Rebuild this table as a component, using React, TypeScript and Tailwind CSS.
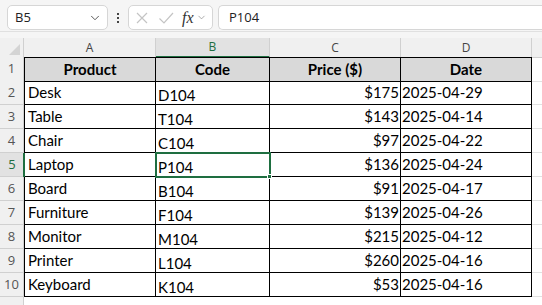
import { ChevronDown } from 'lucide-react'

type Row = { product: string; code: string; price: string; date: string }

const rows: Row[] = [
  { product: 'Desk', code: 'D104', price: '$175', date: '2025-04-29' },
  { product: 'Table', code: 'T104', price: '$143', date: '2025-04-14' },
  { product: 'Chair', code: 'C104', price: '$97', date: '2025-04-22' },
  { product: 'Laptop', code: 'P104', price: '$136', date: '2025-04-24' },
  { product: 'Board', code: 'B104', price: '$91', date: '2025-04-17' },
  { product: 'Furniture', code: 'F104', price: '$139', date: '2025-04-26' },
  { product: 'Monitor', code: 'M104', price: '$215', date: '2025-04-12' },
  { product: 'Printer', code: 'L104', price: '$260', date: '2025-04-16' },
  { product: 'Keyboard', code: 'K104', price: '$53', date: '2025-04-16' },
]

const cellFont = { fontFamily: 'Lato, "Open Sans", sans-serif' }

const FormulaBar = () => (
  <div className="flex h-[32px] items-start border-b border-[#e0e0e0] bg-[#f5f5f5] pl-[7px] pt-[5px]">
    <div className="flex h-[25px] w-[101px] items-center justify-between rounded-[5px] border border-[#d6d6d6] bg-white pl-[7px] pr-[5px] text-[13px] text-[#222]">
      <span>B5</span>
      <ChevronDown size={14} strokeWidth={1.5} className="text-[#444]" />
    </div>
    <div className="mx-[8px] flex h-[25px] w-[4px] flex-col items-center justify-center gap-[2px]">
      <span className="h-[2px] w-[2px] bg-[#444]" />
      <span className="h-[2px] w-[2px] bg-[#444]" />
      <span className="h-[2px] w-[2px] bg-[#444]" />
    </div>
    <div className="flex h-[25px] w-[85px] items-center rounded-[5px] border border-[#d6d6d6] bg-white pl-[5px]">
      <svg width="14" height="14" viewBox="0 0 14 14" className="ml-[1px]">
        <path d="M2 2 L12 12 M12 2 L2 12" stroke="#c4c4c4" strokeWidth="1.2" fill="none" />
      </svg>
      <svg width="16" height="14" viewBox="0 0 16 14" className="ml-[9px]">
        <path d="M1.5 7.5 L6 12 L15 2" stroke="#c4c4c4" strokeWidth="1.2" fill="none" />
      </svg>
      <span
        className="ml-[8px] text-[16px] italic leading-none text-[#333]"
        style={{ fontFamily: '"Liberation Serif", serif' }}
      >
        fx
      </span>
      <ChevronDown size={11} strokeWidth={1.5} className="ml-[2px] text-[#888]" />
    </div>
    <div className="ml-[5px] flex h-[25px] flex-1 items-center rounded-l-[5px] border border-r-0 border-[#d6d6d6] bg-white pl-[10px] text-[13px] text-[#222]">
      P104
    </div>
  </div>
)

const App = () => {
  const cols = 'grid grid-cols-[24px_132px_114px_131px_131px_1fr]'

  return (
    <div
      className="h-[305px] w-[542px] overflow-hidden bg-white"
      style={{ fontFamily: '"Open Sans", "Noto Sans", sans-serif' }}
    >
      <FormulaBar />
      <div className="h-[6px] bg-[#f5f5f5]" />

      <div className="relative">
        <div className={`${cols} h-[19px] bg-[#f0f0f0] text-[12px] text-[#444]`}>
          <div className="flex items-end justify-end border-r border-b border-[#d0d0d0] pb-[2px] pr-[3px]">
            <span className="h-0 w-0 border-b-[11px] border-l-[11px] border-b-[#d4d4d4] border-l-transparent" />
          </div>
          <div className="flex items-center justify-center border-r border-b border-[#d0d0d0]">A</div>
          <div className="flex items-center justify-center border-b-2 border-r border-r-[#d0d0d0] border-b-[#1e6e40] bg-[#e2e2e2] text-[#1e6e40]">
            B
          </div>
          <div className="flex items-center justify-center border-r border-b border-[#d0d0d0]">C</div>
          <div className="flex items-center justify-center border-r border-b border-[#d0d0d0]">D</div>
          <div className="border-b border-[#d0d0d0]" />
        </div>

        <div className={`${cols} h-[24px] text-[15px] text-black`} style={cellFont}>
          <div className="flex items-center justify-center border-r border-b border-[#d0d0d0] bg-[#f0f0f0] text-[13px] text-[#555]" style={{ fontFamily: '"Open Sans", sans-serif' }}>
            1
          </div>
          <div className="flex items-center justify-center border-x border-y border-black bg-[#d9d9d9] font-bold">Product</div>
          <div className="flex items-center justify-center border-r border-y border-black bg-[#d9d9d9] font-bold">Code</div>
          <div className="flex items-center justify-center border-r border-y border-black bg-[#d9d9d9] font-bold">Price ($)</div>
          <div className="flex items-center justify-center border-r border-y border-black bg-[#d9d9d9] font-bold">Date</div>
          <div className="border-b border-[#e1e1e1]" />
        </div>

        {rows.map((r, i) => {
          const selected = i === 3
          return (
            <div key={r.code} className={`${cols} h-[24px] text-[15px] text-black`} style={cellFont}>
              <div
                className={
                  selected
                    ? 'flex items-center justify-center border-b border-[#d0d0d0] bg-[#e2e2e2] text-[13px] text-[#1e6e40]'
                    : 'flex items-center justify-center border-r border-b border-[#d0d0d0] bg-[#f0f0f0] text-[13px] text-[#555]'
                }
                style={{ fontFamily: '"Open Sans", sans-serif' }}
              >
                {i + 2}
              </div>
              <div className="flex items-end border-x border-b border-black pb-[4px] pl-[3px] leading-none">{r.product}</div>
              <div className="flex items-end border-r border-b border-black pb-[1px] pl-[2px] leading-none">{r.code}</div>
              <div className="flex items-end justify-end border-r border-b border-black pb-[4px] pr-[1px] leading-none">{r.price}</div>
              <div className="flex items-end border-r border-b border-black pb-[4px] pl-[1px] leading-none">{r.date}</div>
              <div className="border-b border-[#e1e1e1]" />
            </div>
          )
        })}

        <div className={`${cols} h-[24px]`}>
          <div className="border-r border-[#d0d0d0] bg-[#f0f0f0]" />
        </div>

        {/* active cell B5 */}
        <div className="pointer-events-none absolute left-[155px] top-[114px] h-[26px] w-[116px] border-2 border-[#1e6e40]">
          <span className="absolute -bottom-[3px] -right-[3px] h-[5px] w-[5px] border border-white bg-[#1e6e40]" />
        </div>
        <div className="pointer-events-none absolute left-[23px] top-[115px] h-[24px] w-[2px] bg-[#1e6e40]" />
      </div>
    </div>
  )
}

export default App
